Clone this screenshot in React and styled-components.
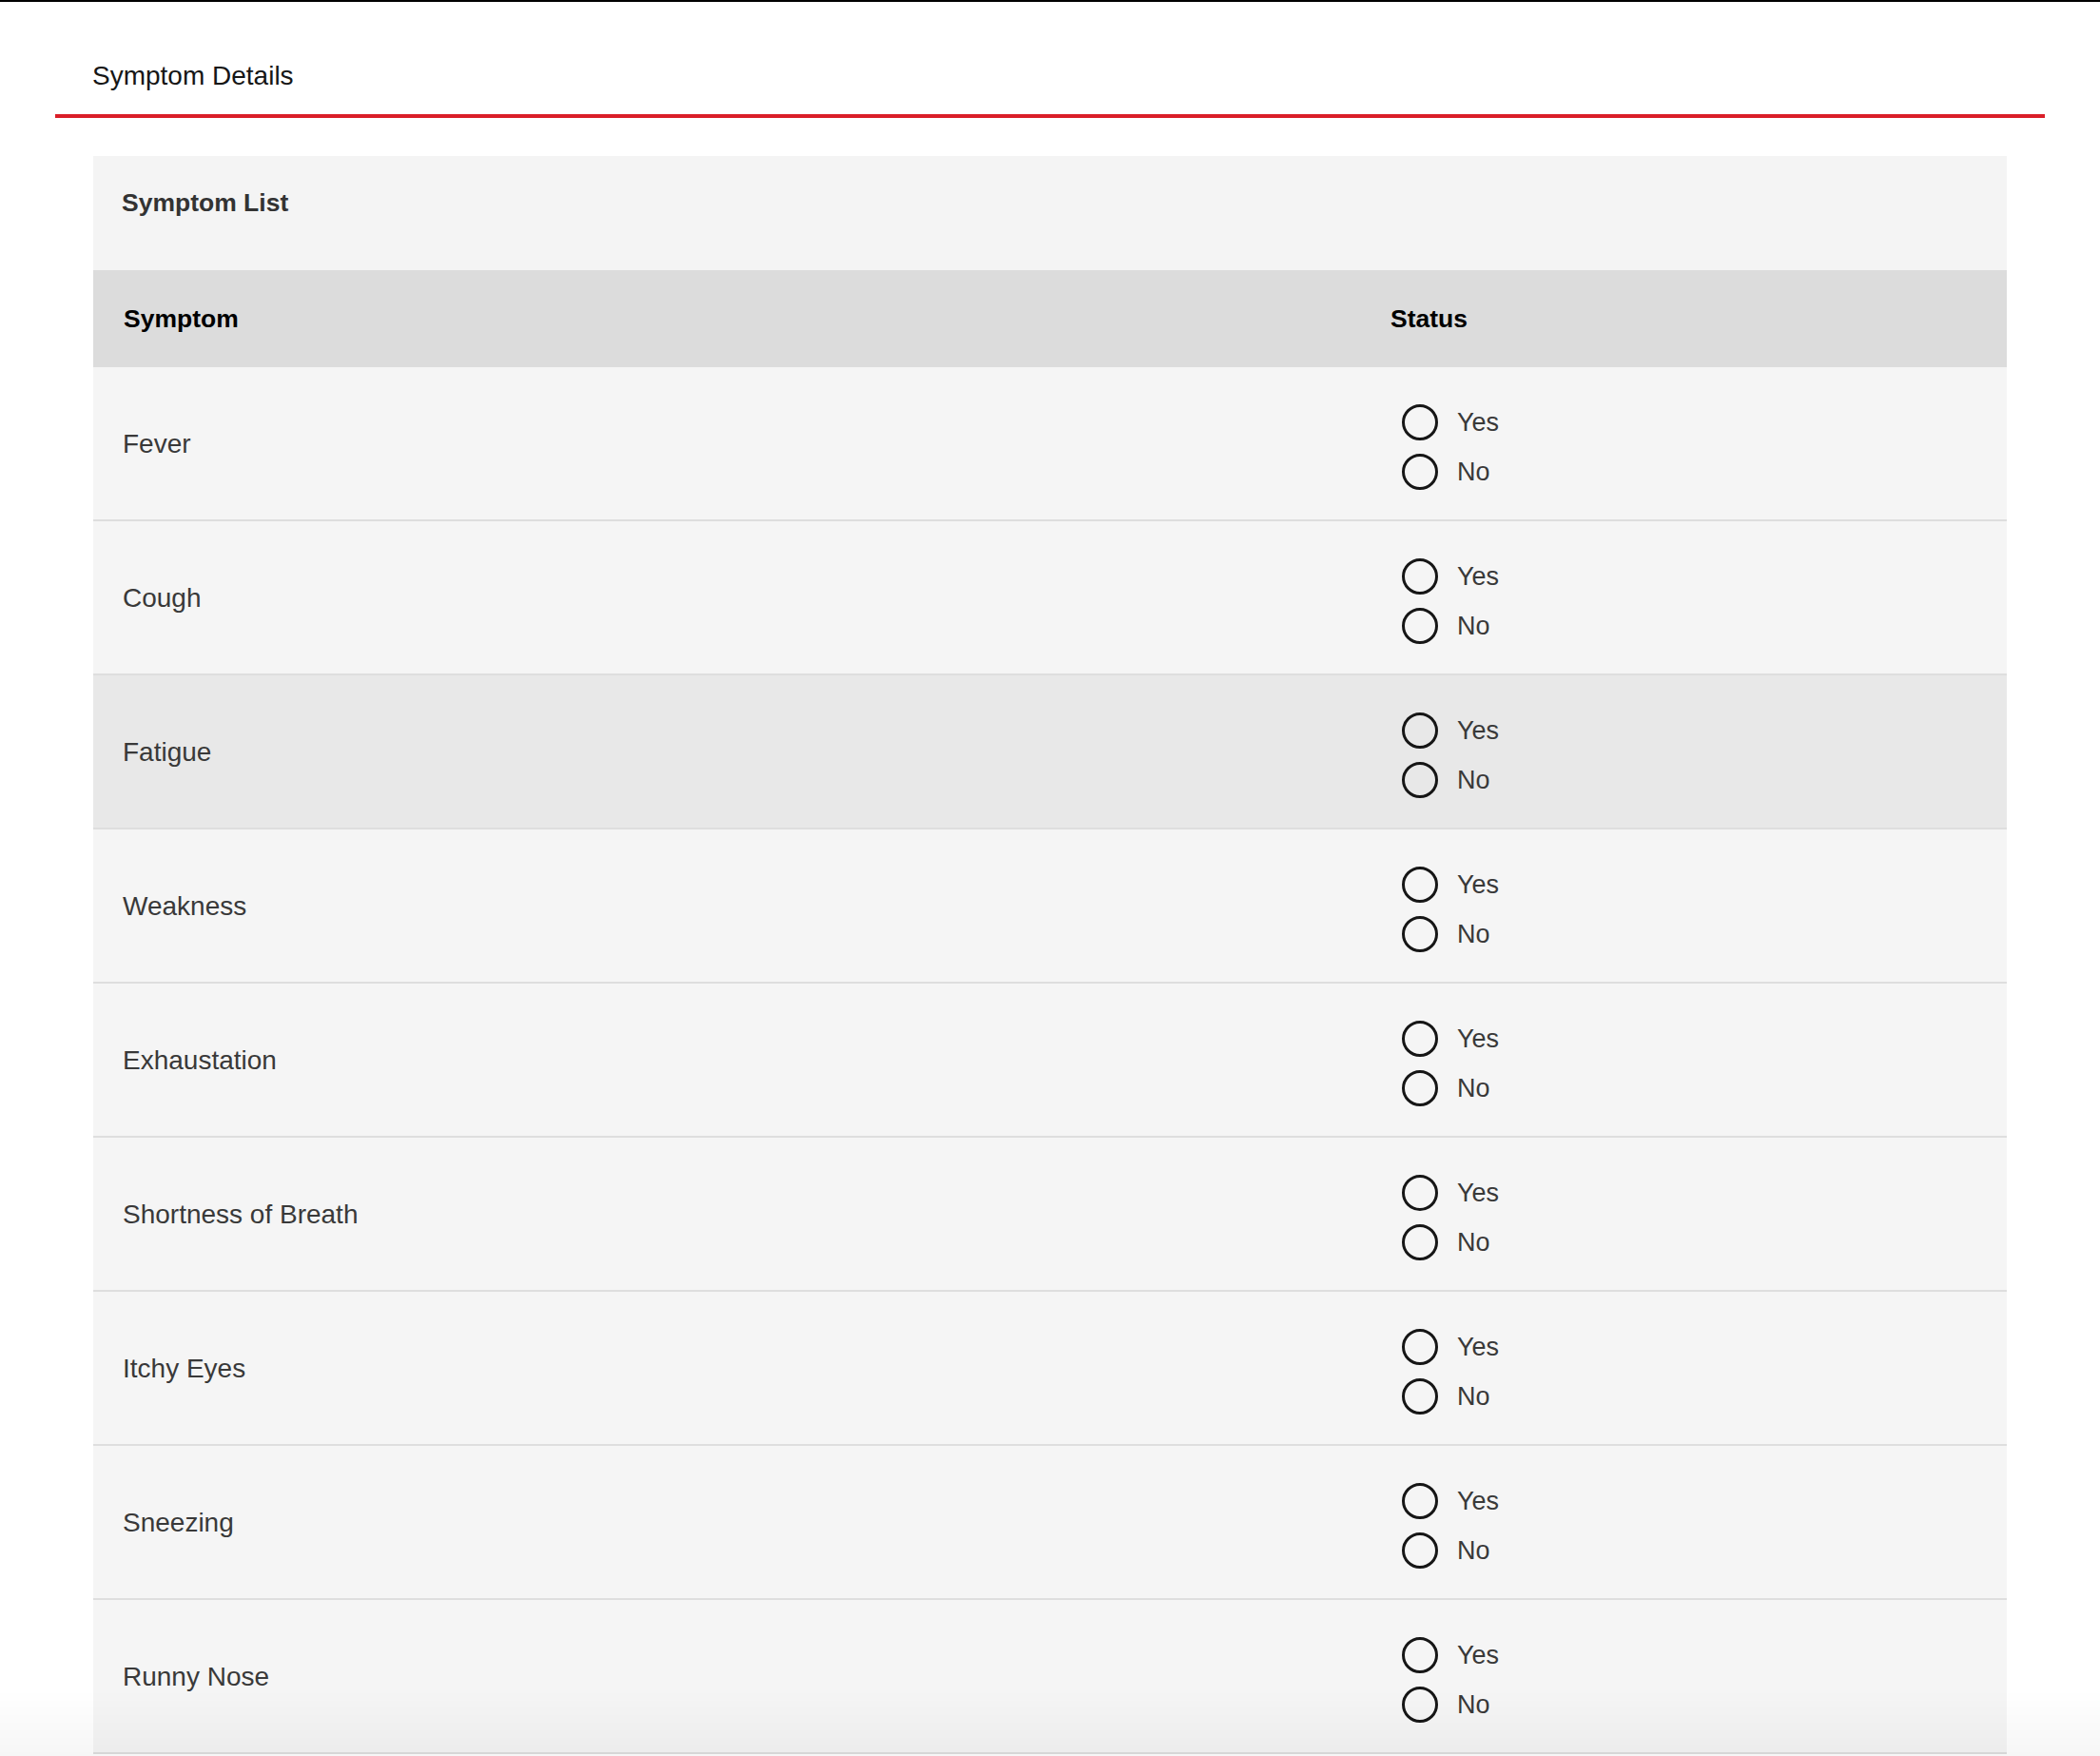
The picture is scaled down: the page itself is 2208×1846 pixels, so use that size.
import React from "react";
import styled, { createGlobalStyle } from "styled-components";

const GlobalStyle = createGlobalStyle`
  body {
    margin: 0;
    background: #ffffff;
    font-family: "Liberation Sans", Arial, sans-serif;
    color: #161616;
  }
`;

const Page = styled.div`
  min-height: 1846px;
  border-top: 2px solid #000000;
  box-sizing: border-box;
`;

const TabBar = styled.div`
  margin: 0 58px;
  padding: 58px 0 20px 39px;
  border-bottom: 4px solid #da1e28;
`;

const TabLabel = styled.div`
  font-size: 28px;
  line-height: 40px;
  color: #161616;
`;

const Panel = styled.section`
  margin: 40px 98px 0;
  background: #f4f4f4;
`;

const PanelTitle = styled.h2`
  margin: 0;
  padding: 31px 30px 53px;
  font-size: 26.5px;
  line-height: 36px;
  font-weight: 700;
  color: #333333;
`;

const Grid = styled.div`
  display: grid;
  grid-template-columns: 1332px 1fr;
`;

const HeadCell = styled.div`
  height: 102px;
  display: flex;
  align-items: center;
  padding-left: 32px;
  background: #dcdcdc;
  font-size: 26.5px;
  line-height: 36px;
  font-weight: 700;
  color: #000000;
`;

const Row = styled.div`
  display: contents;
  & > div {
    background: ${(p) => (p.$hover ? "#e8e8e8" : "#f5f5f5")};
  }
`;

const Cell = styled.div`
  height: 160px;
  box-sizing: border-box;
  display: flex;
  align-items: center;
  padding-left: ${(p) => (p.$radio ? "44px" : "31px")};
  padding-top: 2px;
  border-bottom: 2px solid #dedede;
  font-size: 28px;
  line-height: 40px;
  color: #393939;
  height: 162px;
`;

const RadioGroup = styled.div`
  display: flex;
  flex-direction: column;
  gap: 14px;
  margin-top: 6px;
`;

const Option = styled.label`
  display: flex;
  align-items: center;
  gap: 20px;
  height: 38px;
  line-height: 38px;
  font-size: 27px;
  color: #393939;
  cursor: pointer;
`;

const Radio = styled.input`
  appearance: none;
  margin: 0;
  width: 38px;
  height: 38px;
  border: 3.5px solid #161616;
  border-radius: 50%;
  box-sizing: border-box;
  background: transparent;
`;

const BottomFade = styled.div`
  position: fixed;
  left: 0;
  right: 0;
  bottom: 0;
  height: 70px;
  pointer-events: none;
  background: linear-gradient(to bottom, rgba(0, 0, 0, 0), rgba(0, 0, 0, 0.035));
`;

const symptoms = [
  "Fever",
  "Cough",
  "Fatigue",
  "Weakness",
  "Exhaustation",
  "Shortness of Breath",
  "Itchy Eyes",
  "Sneezing",
  "Runny Nose",
];

const App = () => {
  return (
    <Page>
      <GlobalStyle />
      <TabBar>
        <TabLabel>Symptom Details</TabLabel>
      </TabBar>
      <Panel>
        <PanelTitle>Symptom List</PanelTitle>
        <Grid>
          <HeadCell>Symptom</HeadCell>
          <HeadCell>Status</HeadCell>
          {symptoms.map((name, key) => (
            <Row key={key} $hover={name === "Fatigue"}>
              <Cell>{name}</Cell>
              <Cell $radio>
                <RadioGroup>
                  <Option>
                    <Radio type="radio" name={`s${key}`} value="yes" />
                    Yes
                  </Option>
                  <Option>
                    <Radio type="radio" name={`s${key}`} value="no" />
                    No
                  </Option>
                </RadioGroup>
              </Cell>
            </Row>
          ))}
        </Grid>
      </Panel>
      <BottomFade />
    </Page>
  );
};

export default App;
